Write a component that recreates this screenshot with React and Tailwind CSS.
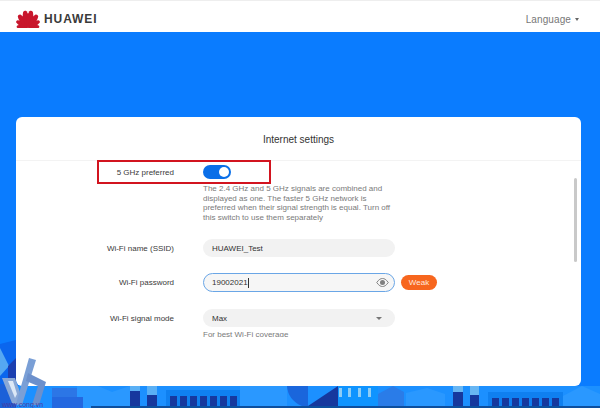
import React from "react";

const font = { fontFamily: '"Liberation Sans", Arial, sans-serif' };

const HuaweiLogo = () => (
  <svg width="24" height="18" viewBox="0 0 48 36" fill="#c8162c">
    {[
      [-84, 0.66],
      [-60, 0.78],
      [-36, 0.92],
      [-11, 1],
      [11, 1],
      [36, 0.92],
      [60, 0.78],
      [84, 0.66],
    ].map(([angle, len]) => (
      <path
        key={angle}
        transform={`translate(24 35.5) rotate(${angle}) scale(${len})`}
        d="M0 0 C-6 -9 -8.5 -22 -3.5 -33 C-1.5 -35 1.5 -35 3.5 -33 C8.5 -22 6 -9 0 0 Z"
      />
    ))}
  </svg>
);

const Eye = () => (
  <svg width="13" height="9" viewBox="0 0 26 18">
    <path d="M1.5 9 C6 2.5 9.5 1 13 1 C16.5 1 20 2.5 24.5 9 C20 15.5 16.5 17 13 17 C9.5 17 6 15.5 1.5 9 Z" fill="none" stroke="#808080" strokeWidth="2" />
    <circle cx="13" cy="9" r="5" fill="#808080" />
  </svg>
);

const bars = (xs, y, w, h) =>
  xs.map((x) => <rect key={x} x={x} y={y} width={w} height={h} fill="#16389e" />);

// skyline drawing along the bottom of the blue background
const Skyline = () => (
  <svg className="absolute bottom-0 left-0" width="600" height="68" viewBox="0 340 600 68">
    <rect x="0" y="386" width="600" height="22" fill="#1c90ff" />
    <rect x="52" y="388" width="25" height="9" fill="#2c76e6" />
    <rect x="52" y="397" width="31" height="11" fill="#2468e0" />
    <path d="M77 386 L98 386 L112 392 L130 386 L130 408 L83 408 L83 397 L77 397 Z" fill="#2a98ff" />
    <rect x="130" y="386" width="10" height="5" fill="#5ab0f5" />
    <rect x="130" y="391" width="10" height="15" fill="#16389e" />
    <rect x="147" y="386" width="10" height="9" fill="#5ab0f5" />
    <rect x="147" y="395" width="10" height="11" fill="#16389e" />
    <rect x="166" y="390" width="74" height="18" fill="#0f80f0" />
    {bars([170, 180, 190, 200, 210, 220, 230], 396, 7, 10)}
    <rect x="240" y="386" width="47" height="22" fill="#2a98ff" />
    <path d="M287 386 L308 386 L308 406 L302 406 Q288 400 287 386 Z" fill="#1a66dc" />
    <path d="M308 406 L338 386 L338 406 Z" fill="#16389e" />
    <rect x="338" y="386" width="40" height="22" fill="#0f94ff" />
    {[339, 348, 358, 368].map((x) => (
      <rect key={x} x={x} y="388" width="3" height="9" fill="#8fcdf5" />
    ))}
    <path d="M378 394 L393 386 L404 392 L404 406 L378 406 Z" fill="#2a7ce8" />
    <path d="M406 393 L427 388 L445 394 L445 406 L406 406 Z" fill="#2a98ff" />
    <rect x="453" y="386" width="10" height="6" fill="#68b6f3" />
    <rect x="453" y="392" width="10" height="14" fill="#16389e" />
    <rect x="470" y="386" width="9" height="9" fill="#68b6f3" />
    <rect x="470" y="395" width="9" height="11" fill="#16389e" />
    <rect x="488" y="392" width="75" height="14" fill="#0f80f0" />
    {bars([492, 502, 512, 522, 532, 542, 552], 398, 7, 8)}
    <path d="M563 406 L563 396 L582 386 L600 394 L600 406 Z" fill="#2a98ff" />
    <rect x="91" y="406" width="509" height="2" fill="#0d4f9e" />
    <path d="M0 344 L16 340 L16 386 L0 386 Z" fill="#0a66ee" />
    <path d="M0 348 L9 366 L0 376 Z" fill="#55a8f2" />
    <path d="M8 366 L16 358 L16 384 L8 384 Z" fill="#1c3fb0" />
    <rect x="0" y="384" width="16" height="24" fill="#1c60d8" />
  </svg>
);

// watermark in the bottom left corner
const Watermark = () => (
  <div className="absolute bottom-0 left-0 h-[50px] w-[48px]">
    <svg width="48" height="50" viewBox="0 358 48 50">
      <path d="M2 378 L15 378 L22 398 L18 405 L12 403 Z" fill="#8aa8d6" />
      <path d="M8 381 L13 381 L17 394 L15 398 Z" fill="#dce8f6" />
      <path d="M29 358 L36 360 L22 405 L16 404 Z" fill="#7a9fd6" />
      <path d="M28 373 L46 382 L39 405 L32 405 L38 386 L26 381 Z" fill="#6c90cc" />
    </svg>
    <span className="absolute bottom-[-1px] left-[2px] whitespace-nowrap text-[7px] leading-[8px] text-[#4a3aa0]">
      www.cong.vn
    </span>
  </div>
);

const Row = ({ label, className = "", aside, children }) => (
  <div className={`flex items-center ${className}`}>
    <div className="w-[159px] pr-px pt-px text-right text-[8px] text-[#3a3a3a]">{label}</div>
    <div className="ml-[28px] w-[192px] shrink-0">{children}</div>
    {aside}
  </div>
);

export default function App() {
  return (
    <div className="relative flex h-[408px] w-[600px] flex-col overflow-hidden bg-[#0a7cff]" style={font}>
      <Skyline />

      <header className="relative flex h-[32px] items-center justify-between border-t border-[#eeeeee] bg-white pl-[16px] pr-[21px] pt-[4px]">
        <div className="flex items-center gap-[4px]">
          <HuaweiLogo />
          <span className="text-[12px] font-bold tracking-[0.9px] text-[#3a3a3a]">HUAWEI</span>
        </div>
        <div className="flex items-center gap-[4px] pt-px text-[10px] tracking-[0.1px] text-[#777777]">
          Language
          <span className="mt-px h-0 w-0 border-x-[2.5px] border-t-[3px] border-x-transparent border-t-[#666666]" />
        </div>
      </header>

      <main className="relative flex flex-1 flex-col pb-[22px] pl-[16px] pr-[19px] pt-[85px]">
        <div className="relative flex flex-1 flex-col rounded-[6px] bg-white">
          <div className="flex h-[44px] shrink-0 items-center justify-center border-b border-[#f3f3f3] pt-px text-[10px] text-[#333333]">
            Internet settings
          </div>

          <div className="relative h-[176px] overflow-hidden pt-[4px]">
            <Row label="5 GHz preferred" className="h-[14px]">
              <div className="flex h-[14px] w-[28px] items-center justify-end rounded-full bg-[#0a6fe8] pr-[2px]">
                <span className="h-[10px] w-[10px] rounded-full bg-white" />
              </div>
            </Row>
            <div className="ml-[187px] mt-[5px] w-[192px] text-[8px] leading-[9.6px] text-[#7a7a7a]">
              The 2.4 GHz and 5 GHz signals are combined and displayed as one. The faster 5 GHz network is preferred when their signal strength is equal. Turn off this switch to use them separately
            </div>

            <Row label="Wi-Fi name (SSID)" className="mt-[17px]">
              <div className="flex h-[18px] items-center rounded-full bg-[#f2f2f2] px-[9px] pt-px text-[8px] text-[#333333]">
                HUAWEI_Test
              </div>
            </Row>

            <Row
              label="Wi-Fi password"
              className="mt-[16px]"
              aside={
                <div className="ml-[6px] flex h-[15px] w-[36px] items-center justify-center rounded-full bg-[#f7661e] text-[8px] text-[#ffe9dd]">
                  Weak
                </div>
              }
            >
              <div className="flex h-[19px] items-center justify-between rounded-full border border-[#6aa6e6] bg-[#f6f6f6] pl-[8px] pr-[5px] text-[8px] text-[#333333]">
                <span className="flex items-center">
                  19002021
                  <span className="h-[10px] w-px bg-[#333333]" />
                </span>
                <Eye />
              </div>
            </Row>

            <Row label="Wi-Fi signal mode" className="mt-[17px]">
              <div className="flex h-[18px] items-center justify-between rounded-full bg-[#f2f2f2] pl-[9px] pr-[13px] pt-px text-[8px] text-[#333333]">
                Max
                <span className="h-0 w-0 border-x-[3px] border-t-[3px] border-x-transparent border-t-[#777777]" />
              </div>
            </Row>
            <div className="ml-[187px] mt-[3px] text-[8px] leading-[10px] text-[#7a7a7a]">For best Wi-Fi coverage</div>

            {/* scrollbar */}
            <div className="absolute right-[4px] top-[17px] h-[84px] w-[3px] rounded-full bg-[#c9c9c9]" />
          </div>

          {/* red annotation box */}
          <div className="absolute left-[81px] top-[43px] h-[24px] w-[174px] border-2 border-[#d2141f]" />
        </div>
      </main>

      <Watermark />
    </div>
  );
}
